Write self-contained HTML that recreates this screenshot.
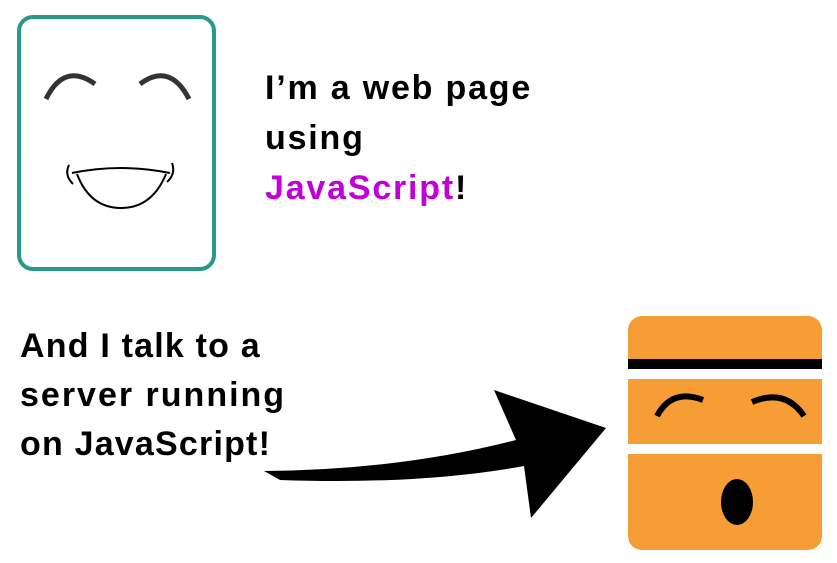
<!DOCTYPE html>
<html><head><meta charset="utf-8"><style>
html,body{margin:0;padding:0;background:#fff;width:837px;height:563px;overflow:hidden;position:relative}
.t{position:absolute;font-family:"Liberation Sans",sans-serif;font-weight:bold;font-size:34px;color:#000;white-space:nowrap;line-height:1;letter-spacing:1.8px}
.m{color:#c000d8}
</style></head><body>
<svg width="837" height="563" style="position:absolute;left:0;top:0">
<rect x="19" y="17" width="195" height="252" rx="14" fill="none" stroke="#26998a" stroke-width="4"/>
<g fill="none" stroke="#333" stroke-width="5" stroke-linecap="butt">
<path d="M46 99 Q64 62 95 84"/>
<path d="M140 84 Q170 62 189 99"/>
</g>
<g fill="none" stroke="#000" stroke-width="2">
<path d="M72 173 Q121 163 170 173"/>
<path d="M77 174 Q90 208 121 208 Q152 208 166 174"/>
<path d="M69 165 Q64 175 73 184"/>
<path d="M172 163 Q176 174 167 182"/>
</g>
<rect x="628" y="316" width="194" height="234" rx="14" fill="#f79d35"/>
<rect x="628" y="359" width="194" height="10" fill="#000"/>
<rect x="628" y="369" width="194" height="10" fill="#fff"/>
<rect x="628" y="444" width="194" height="10" fill="#fff"/>
<g fill="none" stroke="#000" stroke-width="6">
<path d="M657 416 Q672 388 703 400"/>
<path d="M752 402 Q785 388 804 416"/>
</g>
<ellipse cx="737" cy="502" rx="16" ry="23" fill="#000"/>
<path d="M264 471 Q400 470 516 440 L494 390 L606 428 L531 518 L524 466 Q420 485 280 480 Z" fill="#000"/>
</svg>
<div class="t" style="left:265px;top:71px">I’m a web page</div>
<div class="t" style="left:265px;top:121px">using</div>
<div class="t" style="left:265px;top:171px"><span class="m">JavaScript</span>!</div>
<div class="t" style="left:20px;top:329px;letter-spacing:1.2px">And I talk to a</div>
<div class="t" style="left:20px;top:378px;letter-spacing:2px">server running</div>
<div class="t" style="left:20px;top:427px;letter-spacing:1.2px">on JavaScript!</div>
</body></html>
